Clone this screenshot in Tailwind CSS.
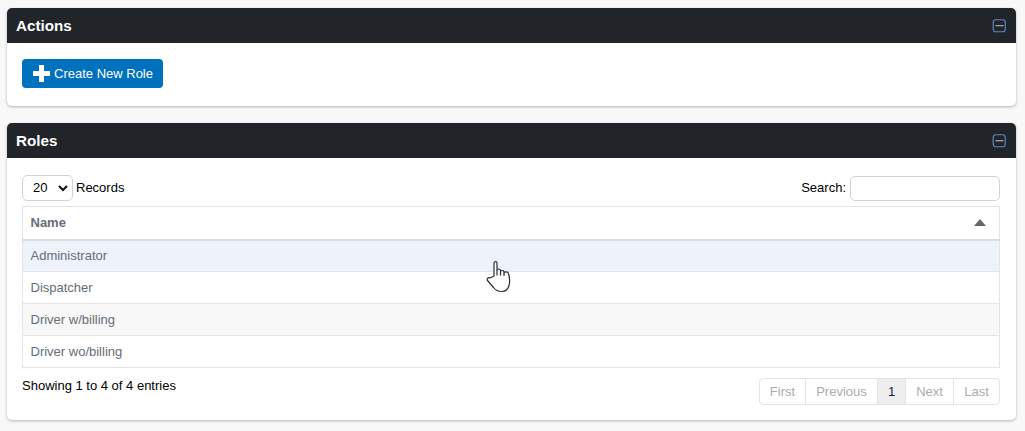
<!DOCTYPE html>
<html lang="en">
  <head>
    <meta charset="UTF-8" />
    <title>Roles</title>
    <script src="https://cdn.jsdelivr.net/npm/@tailwindcss/browser@4"></script>
  </head>
  <body class="relative h-[431px] overflow-hidden bg-[#f8f8f8] px-[7px] pt-[8px] font-['Liberation_Sans',Arial,sans-serif] text-[13px] text-black">
    <!-- actions card -->
    <section class="h-[98px] w-[1009px] overflow-hidden rounded-[5px] bg-white shadow-[0_1px_3px_rgba(0,0,0,0.28)]">
      <header class="flex h-[35px] items-center justify-between bg-[#212529] pl-[9px] pr-[10px]">
        <h2 class="pt-[1px] text-[15.2px] font-bold text-white">Actions</h2>
        <svg width="14" height="14" viewBox="0 0 14 14" fill="none" class="mt-[1px]"><rect x="1.25" y="0.75" width="12" height="12" rx="2.5" stroke="#5b86bd" stroke-width="1.2" /><path d="M3.500 6.750h8" stroke="#c4ccd6" stroke-width="1.2" /></svg>
      </header>
      <div class="px-[15px] pt-[16px]">
        <button class="flex h-[29px] w-[141px] items-center rounded-[4px] bg-[#0071bc] pl-[11px] text-white">
          <svg width="17" height="17" viewBox="0 0 17 17" fill="#fff"><path d="M6 0h5v6h6v5h-6v6H6v-6H0V6h6z" /></svg>
          <span class="ml-[4px]">Create New Role</span>
        </button>
      </div>
    </section>

    <!-- roles card -->
    <section class="mt-[17px] h-[297px] w-[1009px] overflow-hidden rounded-[5px] bg-white shadow-[0_1px_3px_rgba(0,0,0,0.28)]">
      <header class="flex h-[35px] items-center justify-between bg-[#212529] pl-[9px] pr-[10px]">
        <h2 class="pt-[1px] text-[15.2px] font-bold text-white">Roles</h2>
        <svg width="14" height="14" viewBox="0 0 14 14" fill="none" class="mt-[1px]"><rect x="1.25" y="0.75" width="12" height="12" rx="2.5" stroke="#5b86bd" stroke-width="1.2" /><path d="M3.500 6.750h8" stroke="#c4ccd6" stroke-width="1.2" /></svg>
      </header>
      <div class="pl-[15px] pr-[16px] pt-[17px]">
        <div class="flex h-[26px] items-center justify-between">
          <div class="flex items-center gap-[3px]">
            <div class="flex h-[26px] w-[51px] items-center justify-between rounded-[5px] border border-[#ced4da] pl-[10px] pr-[4px]">
              <span>20</span>
              <svg width="10" height="7" viewBox="0 0 10 7" fill="none"><path d="M1 1l4 4 4-4" stroke="#111" stroke-width="2" /></svg>
            </div>
            <span>Records</span>
          </div>
          <div class="flex items-center gap-[4px]">
            <span>Search:</span>
            <input type="text" class="h-[25px] w-[150px] rounded-[5px] border border-[#ced4da] bg-white" />
          </div>
        </div>

        <table class="mt-[5px] w-[978px] border-collapse text-[#666d75]">
          <thead>
            <tr class="h-[33px] border border-b-[2px] border-[#e3e4e6] border-b-[#dcdddf]">
              <th class="pl-[7.500px] text-left font-bold">Name</th>
              <th class="w-[40px] pr-[13px]">
                <svg width="12" height="7" viewBox="0 0 12 7" class="ml-auto"><path d="M6 0l6 7H0z" fill="#666" /></svg>
              </th>
            </tr>
          </thead>
          <tbody>
            <tr class="h-[32px] border border-[#e3e4e6] bg-[#eef2fb]">
              <td class="pl-[7.500px]" colspan="2">Administrator</td>
            </tr>
            <tr class="h-[32px] border border-[#e3e4e6] bg-white">
              <td class="pl-[7.500px]" colspan="2">Dispatcher</td>
            </tr>
            <tr class="h-[32px] border border-[#e3e4e6] bg-[#f8f8f8]">
              <td class="pl-[7.500px]" colspan="2">Driver w/billing</td>
            </tr>
            <tr class="h-[32px] border border-[#e3e4e6] bg-white">
              <td class="pl-[7.500px]" colspan="2">Driver wo/billing</td>
            </tr>
          </tbody>
        </table>

        <div class="mt-[10px] flex items-start justify-between">
          <span class="-mt-[2px]">Showing 1 to 4 of 4 entries</span>
          <nav class="flex h-[27px] overflow-hidden rounded-[4px] border border-[#e3e4e6] text-[#a9acb0]">
            <span class="flex w-[46px] items-center justify-center border-r border-[#e3e4e6]">First</span>
            <span class="flex w-[72px] items-center justify-center border-r border-[#e3e4e6]">Previous</span>
            <span class="flex w-[28px] items-center justify-center border-r border-[#e3e4e6] bg-[#eeeeee] text-[#1a1a4a]">1</span>
            <span class="flex w-[48px] items-center justify-center border-r border-[#e3e4e6]">Next</span>
            <span class="flex w-[45px] items-center justify-center">Last</span>
          </nav>
        </div>
      </div>
    </section>

    <!-- mouse pointer over the first row -->
    <svg class="absolute left-[486px] top-[260px]" width="27" height="33" viewBox="0 0 27 33" fill="#fff" stroke="#2b2b33" stroke-width="1.2" stroke-linejoin="round">
      <path d="M8 16V3.500C8 1 11 1 11 3.500V10.500C11 8.500 14.500 8.500 14.500 10.500V12C14.500 10 18 10 18 12V13C18 11.500 22 11.500 22.500 13.500C23.500 17 24 22 23 25.500C22 29 20 31.500 15.500 31.500C11.500 31.500 9.500 30 7.500 27.500L1.500 20.500C0.500 19 2 17 4 18Z" />
      <path d="M11 10.500V15.500M14.500 12V15.500M18 13V16" fill="none" />
    </svg>
  </body>
</html>
